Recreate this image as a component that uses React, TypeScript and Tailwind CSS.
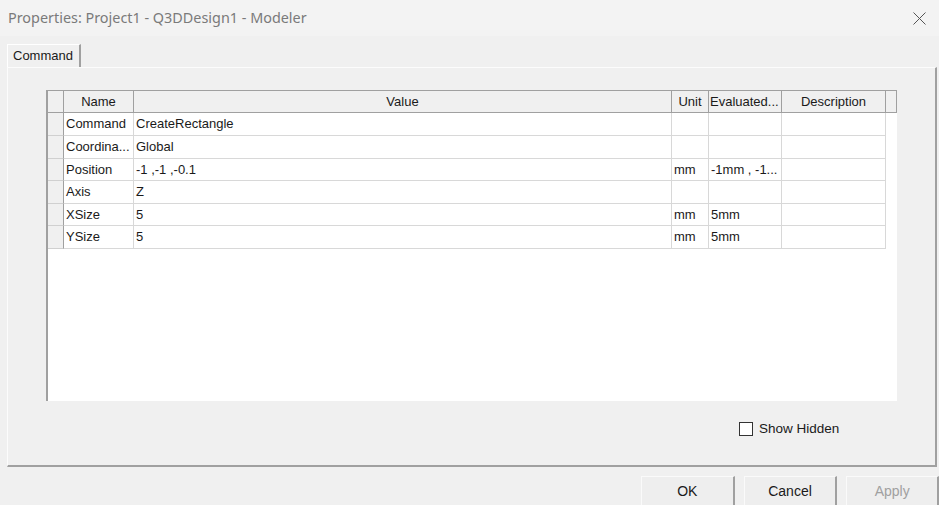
import React from 'react';

type Row = { name: string; value: string; unit: string; evaluated: string };

const rows: Row[] = [
  { name: 'Command', value: 'CreateRectangle', unit: '', evaluated: '' },
  { name: 'Coordina...', value: 'Global', unit: '', evaluated: '' },
  { name: 'Position', value: '-1 ,-1 ,-0.1', unit: 'mm', evaluated: '-1mm , -1...' },
  { name: 'Axis', value: 'Z', unit: '', evaluated: '' },
  { name: 'XSize', value: '5', unit: 'mm', evaluated: '5mm' },
  { name: 'YSize', value: '5', unit: 'mm', evaluated: '5mm' },
];

const rowHeights = ['h-[23px]', 'h-[23px]', 'h-[22px]', 'h-[23px]', 'h-[22px]', 'h-[23px]'];

const HeaderCell: React.FC<{ w: string; children?: React.ReactNode; left?: boolean }> = ({ w, children, left }) => (
  <div
    className={`${w} shrink-0 h-full bg-[#f0f0f0] border-r border-b border-r-[#a0a0a0] border-b-[#a0a0a0] flex items-center overflow-hidden whitespace-nowrap ${
      left ? 'justify-start pl-[1px]' : 'justify-center'
    }`}
  >
    {children}
  </div>
);

const Cell: React.FC<{ w: string; children?: React.ReactNode }> = ({ w, children }) => (
  <div className={`${w} shrink-0 h-full border-r border-b border-[#d8d8d8] flex items-center pl-[2px] overflow-hidden whitespace-nowrap`}>
    {children}
  </div>
);

const App: React.FC = () => {
  return (
    <div
      className="w-[939px] h-[505px] bg-[#f0f0f0] flex flex-col overflow-hidden text-[#1a1a1a]"
      style={{ fontFamily: '"Liberation Sans", Arial, sans-serif' }}
    >
      {/* title bar */}
      <div className="h-[36px] shrink-0 bg-[#f3f3f3] flex items-center justify-between pl-[8px] pr-[13px]">
        <span className="text-[14.4px] text-[#7a7a7a]" style={{ fontFamily: '"Noto Sans", sans-serif' }}>
          Properties: Project1 - Q3DDesign1 - Modeler
        </span>
        <svg width="13" height="13" viewBox="0 0 13 13" className="mt-[1px]">
          <path d="M0.5 0.5 L12.5 12.5 M12.5 0.5 L0.5 12.5" stroke="#555" strokeWidth="1" />
        </svg>
      </div>

      {/* tab strip */}
      <div className="h-[31px] shrink-0 flex items-end pl-[7px]">
        <div className="h-[23px] w-[74px] border-l border-t border-[#ffffff] border-r-2 border-r-[#a0a0a0] flex items-center pl-[5px] text-[13px]">
          Command
        </div>
      </div>

      {/* tab panel */}
      <div className="ml-[7px] w-[930px] h-[400px] shrink-0 border-l border-t border-l-[#fcfcfc] border-t-[#fcfcfc] border-r-2 border-b-2 border-r-[#a0a0a0] border-b-[#a0a0a0] flex flex-col">
        <div className="ml-[38px] mt-[22px] w-[851px] h-[311px] bg-white border-l-2 border-t border-l-[#a0a0a0] border-t-[#a0a0a0] flex flex-col text-[13px]">
          <div className="h-[22px] flex">
            <HeaderCell w="w-[16px]" />
            <HeaderCell w="w-[70px]">Name</HeaderCell>
            <HeaderCell w="w-[538px]">Value</HeaderCell>
            <HeaderCell w="w-[37px]">Unit</HeaderCell>
            <HeaderCell w="w-[73px]" left>
              Evaluated...
            </HeaderCell>
            <HeaderCell w="w-[104px]">Description</HeaderCell>
            <HeaderCell w="w-[11px]" />
          </div>
          {rows.map((r, i) => (
            <div key={r.name} className={`${rowHeights[i]} flex`}>
              <div className="w-[16px] shrink-0 h-full bg-[#f0f0f0] border-r border-b border-r-[#a0a0a0] border-b-[#d0d0d0]" />
              <Cell w="w-[70px]">{r.name}</Cell>
              <Cell w="w-[538px]">{r.value}</Cell>
              <Cell w="w-[37px]">{r.unit}</Cell>
              <Cell w="w-[73px]">{r.evaluated}</Cell>
              <Cell w="w-[104px]" />
            </div>
          ))}
        </div>

        <div className="mt-[18px] ml-[731px] flex items-center gap-[6px]">
          <div className="w-[14px] h-[14px] bg-white border border-[#333333]" />
          <span className="text-[13.5px]">Show Hidden</span>
        </div>
      </div>

      {/* buttons */}
      <div className="mt-[9px] flex gap-[9px] pl-[641px] text-[14px]">
        <div className="w-[94px] h-[31px] bg-[#eeeeee] border-t border-l border-t-[#fafafa] border-l-[#fafafa] border-r-2 border-b-2 border-r-[#a0a0a0] border-b-[#a0a0a0] flex items-center justify-center">
          OK
        </div>
        <div className="w-[94px] h-[31px] bg-[#eeeeee] border-t border-l border-t-[#fafafa] border-l-[#fafafa] border-r-2 border-b-2 border-r-[#a0a0a0] border-b-[#a0a0a0] flex items-center justify-center">
          Cancel
        </div>
        <div className="w-[93px] h-[31px] bg-[#eeeeee] border-t border-l border-t-[#fafafa] border-l-[#fafafa] border-r-2 border-b-2 border-r-[#a0a0a0] border-b-[#a0a0a0] flex items-center justify-center text-[#a0a0a0]">
          Apply
        </div>
      </div>
    </div>
  );
};

export default App;
